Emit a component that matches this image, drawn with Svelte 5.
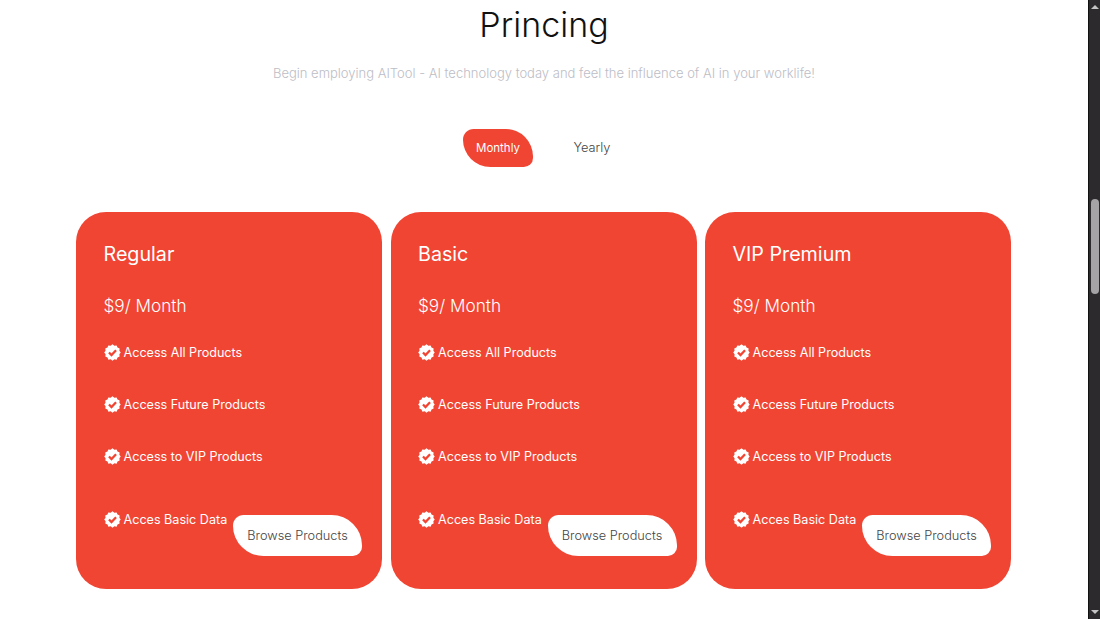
<script>
    const plans = ["Regular", "Basic", "VIP Premium"];
    const features = [
        "Access All Products",
        "Access Future Products",
        "Access to VIP Products",
        "Acces Basic Data"
    ];
    let period = "Monthly";
</script>

<div class="page">
    <main>
        <h1>Princing</h1>
        <p class="sub">Begin employing AITool - AI technology today and feel the influence of AI in your worklife!</p>

        <div class="toggle">
            <button class="tab" class:active={period === "Monthly"} on:click={() => (period = "Monthly")}>Monthly</button>
            <button class="tab" class:active={period === "Yearly"} on:click={() => (period = "Yearly")}>Yearly</button>
        </div>

        <div class="cards">
            {#each plans as plan}
                <section class="card">
                    <h2>{plan}</h2>
                    <p class="price">$9/ Month</p>
                    <ul>
                        {#each features as feature}
                            <li>
                                <svg viewBox="0 0 24 24" width="17" height="17">
                                    <path fill="#fff" d="M12 0.5l2.6 1.9 3.2-.4 1.3 3 3 1.3-.4 3.2 1.9 2.5-1.9 2.6.4 3.2-3 1.3-1.3 3-3.2-.4-2.6 1.8-2.6-1.8-3.2.4-1.3-3-3-1.3.4-3.2L.3 12l1.9-2.5-.4-3.2 3-1.3 1.3-3 3.2.4z" />
                                    <path fill="none" stroke="#f14533" stroke-width="3.2" d="M7 12l3.6 3.6L17 8.8" />
                                </svg>
                                <span>{feature}</span>
                            </li>
                        {/each}
                    </ul>
                    <button class="browse">Browse Products</button>
                </section>
            {/each}
        </div>
    </main>

    <aside class="scrollbar">
        <span class="arrow up"></span>
        <span class="thumb"></span>
        <span class="arrow down"></span>
    </aside>
</div>

<style>
    :global(body) {
        margin: 0;
        background: #fff;
        overflow: hidden;
    }
    .page {
        display: flex;
        height: 619px;
        font-family: Inter, "Liberation Sans", sans-serif;
    }
    main {
        flex: 1;
        min-width: 0;
        display: flex;
        flex-direction: column;
        align-items: center;
    }
    h1 {
        margin: 3px 0 0;
        font-size: 34px;
        line-height: 44px;
        font-weight: 300;
        color: #111;
    }
    .sub {
        margin: 17px 0 0;
        font-size: 13px;
        line-height: 18px;
        font-weight: 300;
        color: #bdbdc6;
    }
    .toggle {
        display: flex;
        align-items: center;
        gap: 24px;
        margin-top: 47px;
        padding-left: 2px;
    }
    .tab {
        width: 70px;
        height: 38px;
        padding: 0;
        border: none;
        background: transparent;
        font-family: inherit;
        font-size: 12.8px;
        color: #444;
        font-weight: 300;
        position: relative;
        top: -1px;
    }
    .tab.active {
        top: 0;
        background: #f14533;
        color: #fff;
        font-weight: 400;
        font-size: 11.5px;
        border-radius: 14px 36px 12px 36px;
    }
    .cards {
        display: flex;
        gap: 8.5px;
        margin-top: 45px;
        padding-right: 1px;
    }
    .card {
        position: relative;
        width: 306px;
        height: 377px;
        box-sizing: border-box;
        padding: 28px 27px 0 27.5px;
        background: #f14533;
        border-radius: 30px;
        color: #fff;
    }
    h2 {
        margin: 0;
        font-size: 19.7px;
        line-height: 28px;
        font-weight: 400;
    }
    .price {
        margin: 24px 0 0;
        font-size: 17.2px;
        line-height: 28px;
        font-weight: 300;
    }
    ul {
        list-style: none;
        margin: 23px 0 0;
        padding: 0;
        display: flex;
        flex-direction: column;
        gap: 34px;
    }
    li {
        display: flex;
        align-items: center;
        gap: 3px;
        height: 18px;
        font-size: 12.6px;
        white-space: nowrap;
    }
    li:last-child {
        margin-top: 11px;
    }
    .browse {
        position: absolute;
        right: 20px;
        bottom: 33px;
        width: 129px;
        height: 41px;
        padding: 0;
        border: none;
        background: #fff;
        border-radius: 14px 40px 12px 40px;
        font-family: inherit;
        font-size: 12.75px;
        font-weight: 300;
        color: #444;
    }
    .scrollbar {
        width: 12px;
        flex: none;
        box-sizing: border-box;
        background: #2c2a2c;
        border-left: 1px solid #111;
        display: flex;
        flex-direction: column;
        align-items: center;
        position: relative;
    }
    .thumb {
        width: 8px;
        height: 95px;
        margin-top: 190px;
        border-radius: 4px;
        background: #a5a3a5;
    }
    .arrow {
        width: 0;
        height: 0;
        border-left: 4px solid transparent;
        border-right: 4px solid transparent;
    }
    .arrow.up {
        margin-top: 5px;
        border-bottom: 4px solid #c4c4c4;
    }
    .arrow.down {
        margin-top: auto;
        margin-bottom: 5px;
        border-top: 4px solid #c4c4c4;
    }
</style>
